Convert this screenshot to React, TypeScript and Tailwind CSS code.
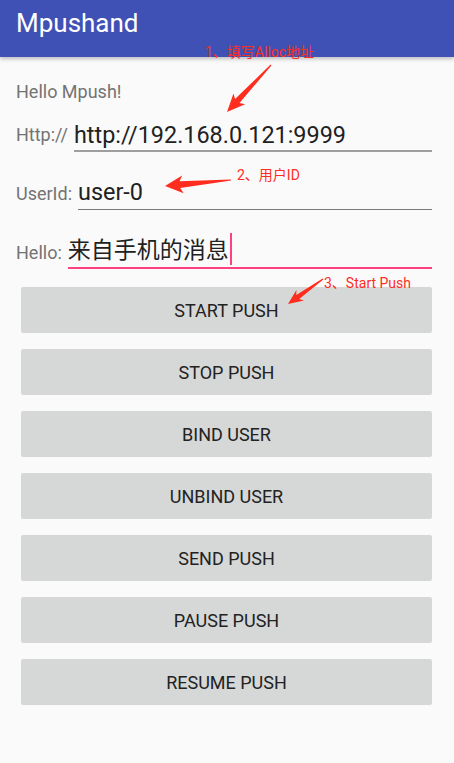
import React from "react";

const font = { fontFamily: 'Roboto, "Noto Sans CJK SC", sans-serif' };

const buttons = [
  "START PUSH",
  "STOP PUSH",
  "BIND USER",
  "UNBIND USER",
  "SEND PUSH",
  "PAUSE PUSH",
  "RESUME PUSH",
];

function arrowPoints(x1: number, y1: number, x2: number, y2: number, head: number, half: number) {
  const dx = x2 - x1;
  const dy = y2 - y1;
  const len = Math.sqrt(dx * dx + dy * dy);
  const ux = dx / len;
  const uy = dy / len;
  const nx = -uy;
  const ny = ux;
  const neckX = x2 - ux * head;
  const neckY = y2 - uy * head;
  const barbX = x2 - ux * (head + 3);
  const barbY = y2 - uy * (head + 3);
  const shaft = half * 0.38;
  const pts = [
    [x1 + nx * 0.6, y1 + ny * 0.6],
    [neckX + nx * shaft, neckY + ny * shaft],
    [barbX + nx * half, barbY + ny * half],
    [x2, y2],
    [barbX - nx * half, barbY - ny * half],
    [neckX - nx * shaft, neckY - ny * shaft],
    [x1 - nx * 0.6, y1 - ny * 0.6],
  ];
  return pts.map((p) => `${p[0].toFixed(1)},${p[1].toFixed(1)}`).join(" ");
}

export default function App() {
  return (
    <div className="relative w-[454px] h-[763px] overflow-hidden bg-[#FAFAFA]" style={font}>
      {/* toolbar */}
      <div className="h-[57px] bg-[#3F51B5] pl-[16px] pt-[8px] shadow-[0_2px_4px_rgba(0,0,0,0.25)]">
        <div className="text-[26px] leading-[30px] text-white">Mpushand</div>
      </div>

      <div className="pl-[16px] pr-[22px]">
        <div className="mt-[24px] text-[18px] leading-[22px] text-[#737373]">Hello Mpush!</div>

        {/* Http row */}
        <div className="mt-[18px] flex items-start gap-[6px]">
          <div className="mt-[3px] text-[18px] leading-[22px] text-[#737373]">Http://</div>
          <div className="h-[31px] flex-1 border-b-2 border-[#9E9E9E] text-[23.4px] leading-[28px] text-[#212121]">
            http://192.168.0.121:9999
          </div>
        </div>

        {/* UserId row */}
        <div className="mt-[26px] flex items-start gap-[6px]">
          <div className="mt-[5px] text-[18px] leading-[22px] text-[#737373]">UserId:</div>
          <div className="h-[32px] flex-1 border-b border-[#7A7A7A] text-[23.4px] leading-[28px] text-[#212121]">
            user-0
          </div>
        </div>

        {/* Hello row */}
        <div className="mt-[27px] flex items-start gap-[6px]">
          <div className="mt-[5px] text-[18px] leading-[22px] text-[#737373]">Hello:</div>
          <div className="flex h-[32px] flex-1 items-start border-b-2 border-[#FF4081] text-[23px] leading-[28px] text-[#212121]">
            <span>来自手机的消息</span>
            <span className="-mt-[4px] ml-[1px] inline-block h-[32px] w-[2px] bg-[#FF4081]"></span>
          </div>
        </div>

        {/* buttons */}
        <div className="mt-[18px] flex flex-col gap-[16px] pl-[5px]">
          {buttons.map((b) => (
            <div
              key={b}
              className="flex h-[46px] items-center justify-center rounded-[2px] bg-[#D6D7D7] text-[18px] text-[#222222]"
            >
              {b}
            </div>
          ))}
        </div>
      </div>

      {/* annotations */}
      <div className="absolute left-[205px] top-[45px] text-[14px] leading-[14px] text-[#FF2D1E] whitespace-nowrap">
        1、填写Alloc地址
      </div>
      <div className="absolute left-[237px] top-[168px] text-[14px] leading-[14px] text-[#FF2D1E] whitespace-nowrap">
        2、用户ID
      </div>
      <div className="absolute left-[324px] top-[276px] text-[14px] leading-[14px] text-[#FF2D1E] whitespace-nowrap">
        3、Start Push
      </div>
      <svg className="pointer-events-none absolute left-0 top-0" width="454" height="763">
        <polygon points={arrowPoints(271, 65, 227, 112, 15, 8)} fill="#FF2D1E" />
        <polygon points={arrowPoints(231, 180, 165, 186, 15, 9)} fill="#FF2D1E" />
        <polygon points={arrowPoints(323, 279, 288, 304, 12, 6.5)} fill="#FF2D1E" />
      </svg>
    </div>
  );
}
